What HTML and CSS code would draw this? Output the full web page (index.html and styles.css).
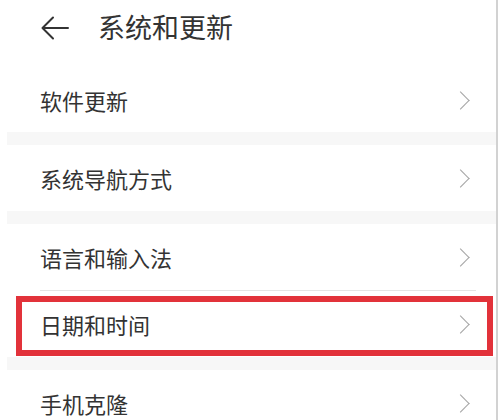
FILE: index.html
```html
<!DOCTYPE html>
<html lang="zh-CN">
<head>
<meta charset="utf-8">
<title>系统和更新</title>
<link rel="stylesheet" href="styles.css">
</head>
<body>
<div class="screen">
  <header class="header">
    <svg class="back" width="28" height="24" viewBox="0 0 28 24" aria-hidden="true">
      <path d="M27 12H2M12 1.5L1.5 12L12 22.5" fill="none" stroke="#333" stroke-width="2" stroke-linecap="round" stroke-linejoin="round"/>
    </svg>
    <h1 class="title">系统和更新</h1>
  </header>

  <section class="group">
    <div class="row"><span class="label">软件更新</span><span class="chev"></span></div>
  </section>
  <div class="gap"></div>
  <section class="group">
    <div class="row"><span class="label">系统导航方式</span><span class="chev"></span></div>
  </section>
  <div class="gap"></div>
  <section class="group">
    <div class="row"><span class="label">语言和输入法</span><span class="chev"></span></div>
    <div class="divider"></div>
    <div class="row highlight"><span class="label">日期和时间</span><span class="chev"></span></div>
  </section>
  <div class="gap"></div>
  <section class="group">
    <div class="row"><span class="label">手机克隆</span><span class="chev"></span></div>
  </section>
</div>
</body>
</html>
```

FILE: styles.css
```css
html, body {
  margin: 0;
  padding: 0;
  background: #ffffff;
}
body {
  width: 499px;
  height: 420px;
  overflow: hidden;
  font-family: "Noto Sans CJK SC", "Noto Sans", sans-serif;
  color: #333333;
}
.screen {
  width: 496px;
  border-right: 2px solid #d2d2d2;
  min-height: 420px;
}
.header {
  height: 68px;
  display: flex;
  align-items: center;
  padding-left: 41px;
  box-sizing: border-box;
}
.back {
  display: block;
  margin-top: -12px;
}
.title {
  margin: -16px 0 0 29px;
  font-size: 27px;
  font-weight: 400;
  line-height: 1;
  color: #333333;
}
.group {
  background: #ffffff;
}
.gap {
  height: 13px;
  margin-left: 7px;
  background: #f7f7f7;
}
.row {
  position: relative;
  height: 66px;
  display: flex;
  align-items: center;
  justify-content: space-between;
  padding: 0 25px 0 40px;
  box-sizing: border-box;
}
.group:first-of-type .row {
  height: 64px;
}
.label {
  font-size: 22px;
  line-height: 1;
  color: #333333;
}
.chev {
  width: 12px;
  height: 12px;
  border-top: 1.6px solid #a4a4a4;
  border-right: 1.6px solid #a4a4a4;
  transform: rotate(45deg);
  margin-right: 4px;
}
.divider {
  height: 1px;
  margin: 0 20px 0 40px;
  background: #e4e4e4;
}
.highlight::after {
  content: "";
  position: absolute;
  left: 16px;
  top: 5px;
  width: 477px;
  height: 60px;
  box-sizing: border-box;
  border: 6px solid #e2323a;
}
```
